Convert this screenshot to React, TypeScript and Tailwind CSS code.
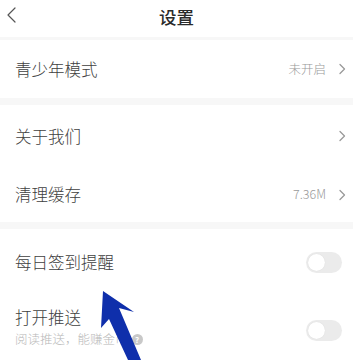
import React from 'react';

const font = { fontFamily: '"Noto Sans CJK SC", "Noto Sans", sans-serif' };

function Chevron() {
  return (
    <svg width="8" height="12" viewBox="0 0 8 12" fill="none" stroke="#9a9a9a" strokeWidth="1.3" strokeLinecap="round" strokeLinejoin="round">
      <path d="M2 1.5l4.5 4.5L2 10.5" />
    </svg>
  );
}

function Toggle() {
  return (
    <div className="w-[36px] h-[21px] rounded-full bg-[#ebebeb] p-[2px] flex items-center">
      <div className="w-[17px] h-[17px] rounded-full bg-white shadow-[0_0_1px_rgba(0,0,0,0.12)]" />
    </div>
  );
}

function Row({ title, value, arrow, height }: { title: string; value?: string; arrow?: boolean; height: string }) {
  return (
    <div className={`flex items-center justify-between pl-[15px] pr-[7px] bg-white ${height}`}>
      <span className="text-[16.5px] font-light text-[#404040]">{title}</span>
      <div className="flex items-center gap-[12px]">
        {value && <span className="text-[12.5px] font-light text-[#999]">{value}</span>}
        {arrow && <Chevron />}
      </div>
    </div>
  );
}

export default function App() {
  return (
    <div className="relative w-[353px] h-[360px] overflow-hidden bg-white" style={font}>
      {/* Header */}
      <div className="relative h-[37px] flex items-center justify-center bg-white">
        <svg className="absolute left-[6px] top-[7px]" width="12" height="16" viewBox="0 0 12 16" fill="none" stroke="#555" strokeWidth="1.2" strokeLinecap="round" strokeLinejoin="round">
          <path d="M9 1L2 8l7 7" />
        </svg>
        <span className="text-[17.5px] font-medium text-[#2a2a2a] -mt-[3px]">设置</span>
      </div>
      <div className="h-[3px] bg-[#f7f7f7]" />

      <Row title="青少年模式" value="未开启" arrow height="h-[58px]" />
      <div className="h-[7px] bg-[#f7f7f7]" />

      <Row title="关于我们" arrow height="h-[62px]" />
      <Row title="清理缓存" value="7.36M" arrow height="h-[55px]" />
      <div className="h-[7px] bg-[#f7f7f7]" />

      <div className="flex items-center justify-between pl-[15px] pr-[11px] h-[66px]">
        <span className="text-[16.5px] font-light text-[#404040]">每日签到提醒</span>
        <Toggle />
      </div>
      <div className="flex items-center justify-between pl-[15px] pr-[11px] pt-[10px]">
        <div className="flex flex-col">
          <span className="text-[16.5px] font-light text-[#404040] leading-[24px]">打开推送</span>
          <div className="flex items-center gap-[4px] mt-[1px]">
            <span className="text-[12.5px] font-light text-[#b8b8b8] leading-[18px]">阅读推送，能赚金币</span>
            <span className="w-[11px] h-[11px] rounded-full bg-[#c8c8c8] text-white text-[8px] leading-[11px] text-center font-bold">?</span>
          </div>
        </div>
        <div className="mt-[8px]">
          <Toggle />
        </div>
      </div>

      {/* annotation arrow */}
      <svg className="absolute left-0 top-0 pointer-events-none" width="353" height="360" viewBox="0 0 353 360">
        <polygon points="103,291 134,312 119,308 141,360 128,360 109,319 101,328" fill="#0f2fab" />
      </svg>
    </div>
  );
}
